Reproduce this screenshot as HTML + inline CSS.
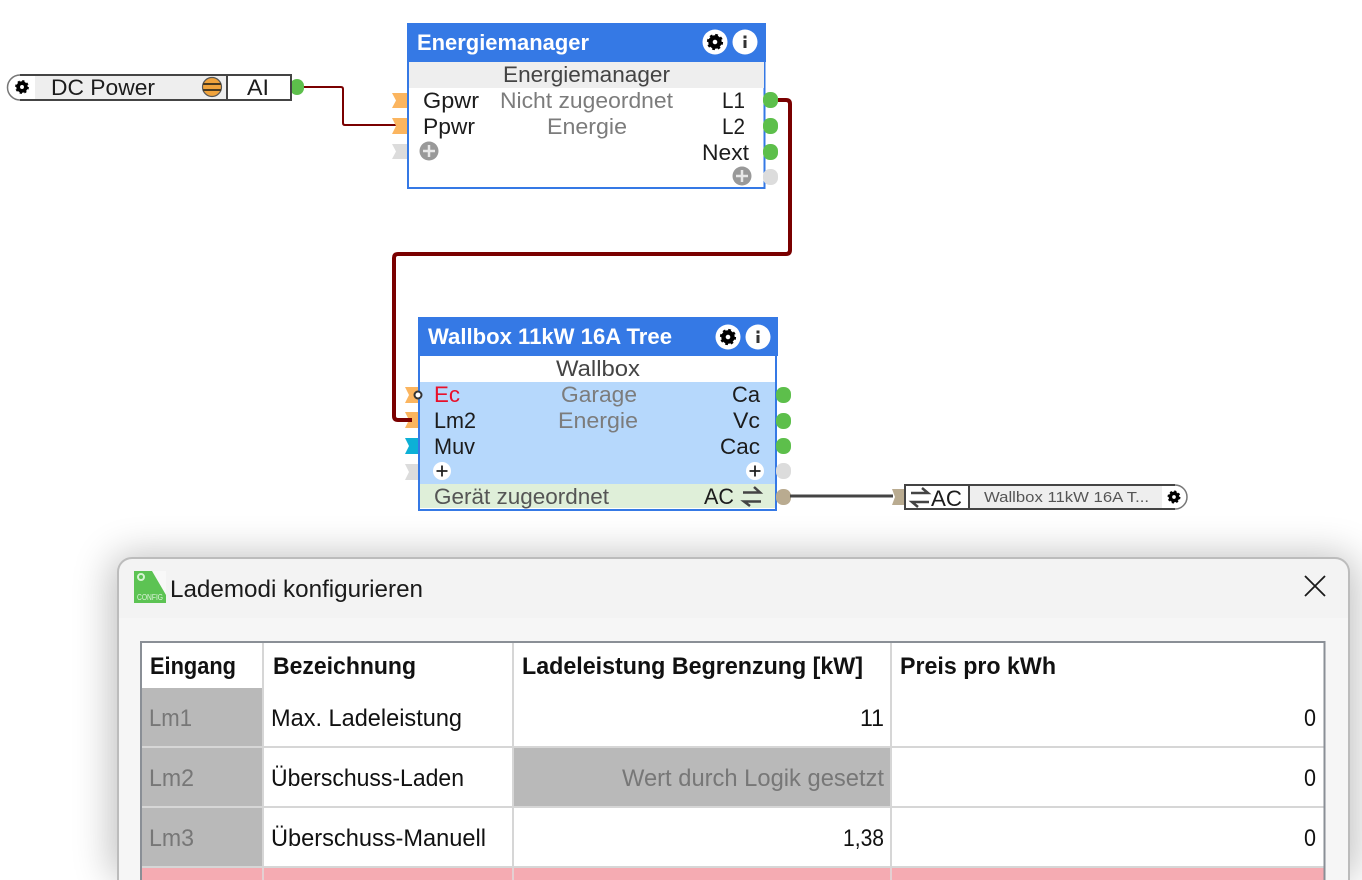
<!DOCTYPE html>
<html><head><meta charset="utf-8"><style>
html,body{margin:0;padding:0;background:#fff;width:1362px;height:880px;overflow:hidden}
svg{display:block}
text{font-family:"Liberation Sans",sans-serif;font-size:22px;fill:#1c1c1c}
.g{fill:#7c7c7c}
.t{font-size:24px;fill:#111}
.h{font-size:24px;font-weight:bold;fill:#111}
.w{fill:#fff;font-weight:bold;font-size:22px}
.r{fill:#777;font-size:24px}
</style></head><body>
<svg width="1362" height="880" viewBox="0 0 1362 880" xmlns="http://www.w3.org/2000/svg">
<defs>
<filter id="sh" filterUnits="userSpaceOnUse" x="0" y="460" width="1362" height="420"><feGaussianBlur stdDeviation="20"/></filter>
<g id="gear"><circle r="4.500" fill="none" stroke="#000" stroke-width="4.400"/><circle r="7" fill="none" stroke="#000" stroke-width="2.200" stroke-dasharray="2.7 2.8"/></g>
</defs>
<rect width="1362" height="880" fill="#fff"/>
<rect x="112" y="556" width="1243" height="324" rx="16" fill="#000" opacity=".26" filter="url(#sh)"/>

<!-- DC Power block -->
<path d="M303 87H341Q343 87 343 89V123Q343 125 345 125H396" fill="none" stroke="#7a0000" stroke-width="2"/>
<rect x="290" y="79" width="14" height="16" rx="7" fill="#5dbf4b"/>
<path d="M22 75.500H291V100.500H22A12.500 12.500 0 0 1 22 75.500Z" fill="#fff"/>
<rect x="35" y="76" width="192" height="24" fill="#eeeeee"/>
<path d="M20 75H291V100H20" fill="none" stroke="#444" stroke-width="2"/>
<path d="M20 75A12.500 12.500 0 0 0 20 100" fill="none" stroke="#777" stroke-width="1.500"/>
<line x1="227" y1="75" x2="227" y2="100" stroke="#444" stroke-width="2"/>
<use href="#gear" transform="translate(22 87) scale(.85)"/>
<text x="51" y="95" textLength="104" lengthAdjust="spacingAndGlyphs">DC Power</text>
<text x="247" y="95" textLength="22" lengthAdjust="spacingAndGlyphs">AI</text>
<circle cx="212" cy="87" r="9.500" fill="#f0a33c" stroke="#555" stroke-width="1.200"/>
<path d="M203 84H221M203 90H221" stroke="#4a3a20" stroke-width="2"/>

<!-- Energiemanager ports -->
<path d="M392 93H408V108H392L396 100.500Z" fill="#fbb55f"/>
<path d="M392 118H408V134H392L396 126Z" fill="#fbb55f"/>
<path d="M392 144H408V159H392L396 151.500Z" fill="#dcdcdc"/>
<!-- Energiemanager block -->
<rect x="408" y="24" width="356.500" height="164" fill="#fff" stroke="#3579e5" stroke-width="2"/>
<rect x="407" y="23" width="359" height="39" fill="#3579e5"/>
<rect x="409" y="62" width="355" height="26" fill="#eeeeee"/>
<text class="w" x="417" y="50" textLength="172" lengthAdjust="spacingAndGlyphs">Energiemanager</text>
<circle cx="715" cy="42" r="12.500" fill="#fff"/><use href="#gear" transform="translate(715 42)"/>
<circle cx="745" cy="42" r="12.500" fill="#fff"/><rect x="743.500" y="40" width="3" height="8" fill="#333"/><rect x="743.500" y="35.500" width="3" height="3" fill="#333"/>
<text x="503" y="82" textLength="167" lengthAdjust="spacingAndGlyphs" style="fill:#444">Energiemanager</text>
<text x="423" y="108" textLength="56" lengthAdjust="spacingAndGlyphs">Gpwr</text>
<text class="g" x="500" y="108" textLength="173" lengthAdjust="spacingAndGlyphs">Nicht zugeordnet</text>
<text x="722" y="108" textLength="23" lengthAdjust="spacingAndGlyphs">L1</text>
<text x="423" y="134" textLength="52" lengthAdjust="spacingAndGlyphs">Ppwr</text>
<text class="g" x="547" y="134" textLength="80" lengthAdjust="spacingAndGlyphs">Energie</text>
<text x="722" y="134" textLength="23" lengthAdjust="spacingAndGlyphs">L2</text>
<text x="702" y="160" textLength="47" lengthAdjust="spacingAndGlyphs">Next</text>
<circle cx="429" cy="151" r="9.500" fill="#999"/><path d="M423 151H435M429 145V157" stroke="#e8e8e8" stroke-width="2.500"/>
<circle cx="742" cy="176" r="9.500" fill="#999"/><path d="M736 176H748M742 170V182" stroke="#e8e8e8" stroke-width="2.500"/>
<rect x="763" y="92" width="15" height="16" rx="7" fill="#5dbf4b"/>
<rect x="763" y="118" width="15" height="16" rx="7" fill="#5dbf4b"/>
<rect x="763" y="144" width="15" height="16" rx="7" fill="#5dbf4b"/>
<rect x="763" y="169" width="15" height="16" rx="7" fill="#dcdcdc"/>

<!-- Thick wire -->
<path d="M778 100H786Q790 100 790 104V250Q790 254 786 254H398Q394 254 394 258V416Q394 420 398 420H410" fill="none" stroke="#7a0000" stroke-width="4"/>

<!-- Wallbox ports -->
<path d="M405 387H420V403H405L409 395Z" fill="#fbb55f"/>
<path d="M405 412H420V428H405L409 420Z" fill="#fbb55f"/>
<path d="M405 438H420V454H405L409 446Z" fill="#0db0d6"/>
<path d="M405 464H420V480H405L409 472Z" fill="#dcdcdc"/>
<path d="M408 420H412" stroke="#7a0000" stroke-width="4"/>
<!-- Wallbox block -->
<rect x="419" y="318" width="357" height="192" fill="#fff" stroke="#3579e5" stroke-width="2"/>
<rect x="418" y="317" width="360" height="39" fill="#3579e5"/>
<rect x="420" y="382" width="355" height="104" fill="#b6d8fc"/>
<rect x="420" y="484" width="355" height="24" fill="#dfefd9"/>
<text class="w" x="428" y="344" textLength="244" lengthAdjust="spacingAndGlyphs">Wallbox 11kW 16A Tree</text>
<circle cx="728" cy="337" r="12.500" fill="#fff"/><use href="#gear" transform="translate(728 337)"/>
<circle cx="758" cy="337" r="12.500" fill="#fff"/><rect x="756.500" y="335" width="3" height="8" fill="#333"/><rect x="756.500" y="330.500" width="3" height="3" fill="#333"/>
<text x="556" y="376" textLength="84" lengthAdjust="spacingAndGlyphs" style="fill:#444">Wallbox</text>
<circle cx="418" cy="395" r="3.500" fill="#fff" stroke="#333" stroke-width="2"/>
<text x="434" y="402" textLength="26" lengthAdjust="spacingAndGlyphs" style="fill:#e8102a">Ec</text>
<text class="g" x="561" y="402" textLength="76" lengthAdjust="spacingAndGlyphs">Garage</text>
<text x="732" y="402" textLength="28" lengthAdjust="spacingAndGlyphs">Ca</text>
<text x="434" y="428" textLength="42" lengthAdjust="spacingAndGlyphs">Lm2</text>
<text class="g" x="558" y="428" textLength="80" lengthAdjust="spacingAndGlyphs">Energie</text>
<text x="733" y="428" textLength="27" lengthAdjust="spacingAndGlyphs">Vc</text>
<text x="434" y="454" textLength="41" lengthAdjust="spacingAndGlyphs">Muv</text>
<text x="720" y="454" textLength="40" lengthAdjust="spacingAndGlyphs">Cac</text>
<circle cx="442" cy="471" r="9" fill="#fff"/><path d="M436.500 471H447.500M442 465.500V476.500" stroke="#222" stroke-width="1.800"/>
<circle cx="755" cy="471" r="9" fill="#fff"/><path d="M749.500 471H760.500M755 465.500V476.500" stroke="#222" stroke-width="1.800"/>
<text x="434" y="504" textLength="175" lengthAdjust="spacingAndGlyphs" style="fill:#555">Gerät zugeordnet</text>
<text x="704" y="504" textLength="30" lengthAdjust="spacingAndGlyphs">AC</text>
<path d="M743 492.500H760L754 487M761 501.500H744L750 506" fill="none" stroke="#444" stroke-width="2.500"/>
<rect x="776" y="387" width="15" height="16" rx="7" fill="#5dbf4b"/>
<rect x="776" y="413" width="15" height="16" rx="7" fill="#5dbf4b"/>
<rect x="776" y="438" width="15" height="16" rx="7" fill="#5dbf4b"/>
<rect x="776" y="463" width="15" height="16" rx="7" fill="#dcdcdc"/>
<rect x="776" y="489" width="15" height="16" rx="7" fill="#b9ab90"/>
<path d="M790 496H893" stroke="#444" stroke-width="3"/>

<!-- AC block -->
<path d="M892 489H906V505H892L895 497Z" fill="#b9ab90"/>
<path d="M905 485.500H1175A11.500 11.500 0 0 1 1175 508.500H905Z" fill="#fff"/>
<rect x="970" y="486" width="192" height="22" fill="#eeeeee"/>
<path d="M1175 485H905V509H1175" fill="none" stroke="#444" stroke-width="2"/>
<path d="M1175 485A12 12 0 0 1 1175 509" fill="none" stroke="#777" stroke-width="1.500"/>
<line x1="969" y1="485" x2="969" y2="509" stroke="#444" stroke-width="2"/>
<path d="M911 493H928L922 488M929 502H912L918 507" fill="none" stroke="#444" stroke-width="2.500"/>
<text x="931" y="506" textLength="31" lengthAdjust="spacingAndGlyphs">AC</text>
<text x="984" y="502" textLength="165" lengthAdjust="spacingAndGlyphs" style="font-size:15px;fill:#555">Wallbox  11kW  16A  T...</text>
<use href="#gear" transform="translate(1174 497) scale(.8)"/>

<!-- Dialog -->
<path d="M118 880V572A14 14 0 0 1 132 558H1335A14 14 0 0 1 1349 572V880Z" fill="#f3f3f3" stroke="#bcbcbc" stroke-width="2"/>
<rect x="119" y="618" width="1229" height="262" fill="#f6f6f6"/>
<rect x="134" y="571" width="32" height="32" fill="#5cc353"/>
<path d="M152 571H166V595Z" fill="#f8f8f8"/>
<circle cx="141" cy="577" r="3" fill="#5cc353" stroke="#d6f4d2" stroke-width="2"/>
<text x="137" y="600" textLength="26" lengthAdjust="spacingAndGlyphs" style="font-size:8px;fill:#dff5dc">CONFIG</text>
<text x="170" y="597" textLength="253" lengthAdjust="spacingAndGlyphs" style="font-size:24px;fill:#1a1a1a">Lademodi konfigurieren</text>
<path d="M1305 576L1325 596M1325 576L1305 596" stroke="#1a1a1a" stroke-width="1.800"/>

<!-- Table -->
<rect x="141" y="641" width="1184" height="239" fill="#fff"/>
<rect x="142" y="688" width="120" height="192" fill="#b9b9b9"/>
<rect x="514" y="748" width="376" height="58" fill="#b9b9b9"/>
<path d="M263 642V880M513 642V880M891 642V880" stroke="#d6d6d6" stroke-width="2"/>
<path d="M142 747H1324M142 807H1324" stroke="#d6d6d6" stroke-width="2"/>
<rect x="142" y="868" width="1182" height="12" fill="#f5abb2"/>
<path d="M263 868V880M513 868V880M891 868V880" stroke="#e4d0d2" stroke-width="2"/>
<path d="M142 867H1324" stroke="#d6d6d6" stroke-width="2"/>
<path d="M141 880V642H1324.500V880" fill="none" stroke="#8a8f96" stroke-width="2"/>

<text class="h" x="150" y="674" textLength="86" lengthAdjust="spacingAndGlyphs">Eingang</text>
<text class="h" x="273" y="674" textLength="143" lengthAdjust="spacingAndGlyphs">Bezeichnung</text>
<text class="h" x="522" y="674" textLength="341" lengthAdjust="spacingAndGlyphs">Ladeleistung Begrenzung [kW]</text>
<text class="h" x="900" y="674" textLength="156" lengthAdjust="spacingAndGlyphs">Preis pro kWh</text>

<text class="r" x="149" y="726" textLength="43" lengthAdjust="spacingAndGlyphs">Lm1</text>
<text class="t" x="271" y="726" textLength="191" lengthAdjust="spacingAndGlyphs">Max. Ladeleistung</text>
<text class="t" x="860" y="726" textLength="24" lengthAdjust="spacingAndGlyphs">11</text>
<text class="t" x="1304" y="726" textLength="12" lengthAdjust="spacingAndGlyphs">0</text>

<text class="r" x="149" y="786" textLength="45" lengthAdjust="spacingAndGlyphs">Lm2</text>
<text class="t" x="271" y="786" textLength="193" lengthAdjust="spacingAndGlyphs">Überschuss-Laden</text>
<text class="r" x="622" y="786" textLength="262" lengthAdjust="spacingAndGlyphs">Wert durch Logik gesetzt</text>
<text class="t" x="1304" y="786" textLength="12" lengthAdjust="spacingAndGlyphs">0</text>

<text class="r" x="149" y="846" textLength="45" lengthAdjust="spacingAndGlyphs">Lm3</text>
<text class="t" x="271" y="846" textLength="215" lengthAdjust="spacingAndGlyphs">Überschuss-Manuell</text>
<text class="t" x="843" y="846" textLength="41" lengthAdjust="spacingAndGlyphs">1,38</text>
<text class="t" x="1304" y="846" textLength="12" lengthAdjust="spacingAndGlyphs">0</text>
</svg>
</body></html>
